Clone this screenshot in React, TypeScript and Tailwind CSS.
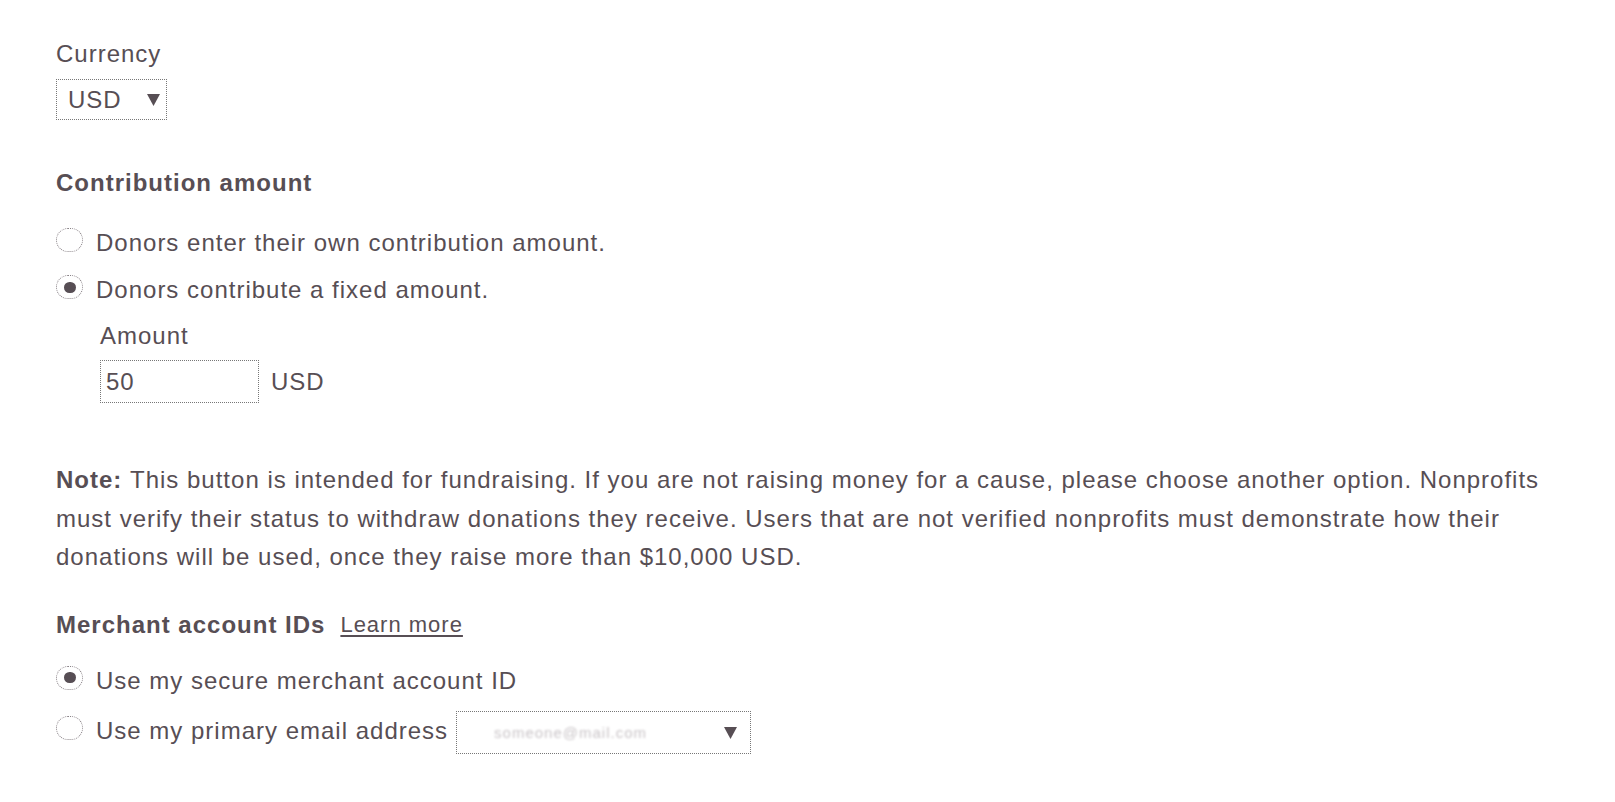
import type { ReactNode } from "react";

function Radio({ checked }: { checked?: boolean }) {
  return (
    <span className="mb-[6px] flex h-[24px] w-[27px] shrink-0 items-center justify-center rounded-full border border-dotted border-[#8a8388]">
      {checked && <span className="h-[11px] w-[12px] rounded-full bg-[#574e54]" />}
    </span>
  );
}

function Arrow() {
  return (
    <svg width="13" height="12" viewBox="0 0 13 12" className="shrink-0">
      <path d="M0 0 H13 L6.5 12 Z" fill="#574e54" />
    </svg>
  );
}

function RadioRow({ checked, children }: { checked?: boolean; children: ReactNode }) {
  return (
    <div className="flex h-[38px] items-center gap-[13px]">
      <Radio checked={checked} />
      {children}
    </div>
  );
}

export default function App() {
  return (
    <div
      className="min-h-[802px] w-full bg-white pl-[56px] pt-[35px] text-[24px] leading-[38px] tracking-[1px] text-[#574e54]"
      style={{ fontFamily: '"Liberation Sans", Arial, sans-serif' }}
    >
      <div className="w-[1520px]">
        {/* Currency */}
        <div>Currency</div>
        <div className="mt-[6px] flex h-[41px] w-[111px] items-center justify-between border border-dotted border-[#777] pl-[11px] pr-[6px]">
          <span>USD</span>
          <Arrow />
        </div>

        {/* Contribution amount */}
        <h2 className="mt-[44px] font-bold">Contribution amount</h2>
        <div className="mt-[22px] flex flex-col gap-[9px]">
          <RadioRow>
            <span>Donors enter their own contribution amount.</span>
          </RadioRow>
          <RadioRow checked>
            <span>Donors contribute a fixed amount.</span>
          </RadioRow>
        </div>

        <div className="mt-[8px] pl-[44px]">
          <div>Amount</div>
          <div className="mt-[5px] flex items-center gap-[12px]">
            <div className="flex h-[43px] w-[159px] items-center border border-dotted border-[#777] pl-[5px]">
              50
            </div>
            <span>USD</span>
          </div>
        </div>

        {/* Note */}
        <p className="mt-[58px] leading-[38.5px]">
          <b>Note: </b>This button is intended for fundraising. If you are not raising money for a cause, please
          choose another option. Nonprofits must verify their status to withdraw donations they receive. Users that
          are not verified nonprofits must demonstrate how their donations will be used, once they raise more than
          $10,000 USD.
        </p>

        {/* Merchant account IDs */}
        <div className="mt-[29px] flex items-center gap-[15px]">
          <h2 className="font-bold">Merchant account IDs</h2>
          <a className="text-[22px] underline underline-offset-[3px]">Learn more</a>
        </div>
        <div className="mt-[18px] flex flex-col gap-[12px]">
          <RadioRow checked>
            <span>Use my secure merchant account ID</span>
          </RadioRow>
          <RadioRow>
            <span>Use my primary email address</span>
            <div className="-ml-[5px] mt-[4px] flex h-[43px] w-[295px] shrink-0 items-center justify-between border border-dotted border-[#777] pl-[37px] pr-[13px]">
              <span className="text-[15px] text-[#c9c4c7] blur-[1px]">someone@mail.com</span>
              <Arrow />
            </div>
          </RadioRow>
        </div>
      </div>
    </div>
  );
}
